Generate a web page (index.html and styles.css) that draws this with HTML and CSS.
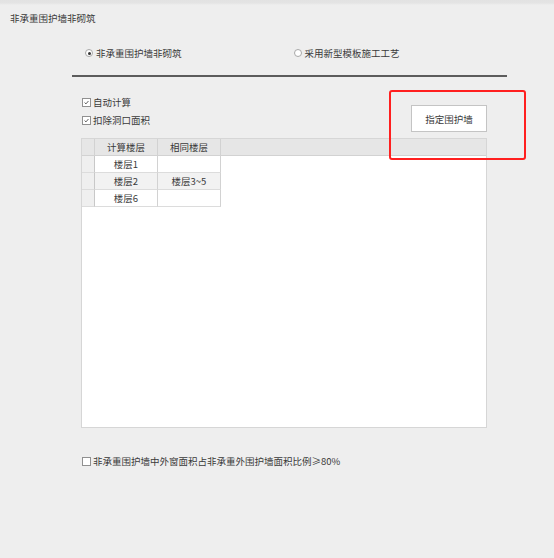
FILE: index.html
```html
<!DOCTYPE html>
<html lang="zh-CN">
<head>
  <meta charset="UTF-8">
  <title>非承重围护墙非砌筑</title>
  <link rel="stylesheet" href="styles.css">
</head>
<body>

<div class="dialog">
  <div class="title">非承重围护墙非砌筑</div>

  <div class="mode-row">
    <label class="radio radio-first"><span class="dot checked"></span>非承重围护墙非砌筑</label>
    <label class="radio radio-second"><span class="dot"></span>采用新型模板施工工艺</label>
  </div>

  <div class="divider"></div>

  <div class="main">
    <div class="options-row">
      <div class="checks">
        <label class="check"><span class="box on"><svg viewBox="0 0 9 9"><path d="M2 4.5 L3.8 6.3 L7 2.6" /></svg></span>自动计算</label>
        <label class="check"><span class="box on"><svg viewBox="0 0 9 9"><path d="M2 4.5 L3.8 6.3 L7 2.6" /></svg></span>扣除洞口面积</label>
      </div>
      <button class="assign-btn">指定围护墙</button>
      <div class="highlight"></div>
    </div>

    <div class="sheet">
      <div class="sheet-head">
        <div class="cell corner"></div>
        <div class="cell col">计算楼层</div>
        <div class="cell col">相同楼层</div>
      </div>
      <div class="sheet-row">
        <div class="cell corner"></div>
        <div class="cell col">楼层1</div>
        <div class="cell col"></div>
      </div>
      <div class="sheet-row alt">
        <div class="cell corner"></div>
        <div class="cell col">楼层2</div>
        <div class="cell col">楼层3~5</div>
      </div>
      <div class="sheet-row">
        <div class="cell corner"></div>
        <div class="cell col">楼层6</div>
        <div class="cell col"></div>
      </div>
    </div>

    <label class="check bottom-check"><span class="box"></span>非承重围护墙中外窗面积占非承重外围护墙面积比例≥80%</label>
  </div>
</div>

</body>
</html>
```

FILE: styles.css
```css
body {
  margin: 0;
  padding: 0;
  height: 558px;
  overflow: hidden;
  font-family: "Noto Sans CJK SC", "Liberation Sans", sans-serif;
  font-size: 9.5px;
  color: #3a3a3a;
  background: linear-gradient(to bottom, #e2e2e2 0, #e4e4e4 3px, #eeeeee 5px) no-repeat;
  background-color: #eeeeee;
}

.title {
  height: 36px;
  line-height: 36px;
  padding-left: 10px;
}

.mode-row {
  display: flex;
  height: 34px;
  align-items: center;
}

.radio {
  display: flex;
  align-items: center;
  gap: 3px;
}

.radio-first {
  margin-left: 85px;
}

.radio-second {
  margin-left: 112px;
}

.dot {
  width: 6px;
  height: 6px;
  border: 1px solid #a8a8a8;
  border-radius: 50%;
  background-color: #fff;
  display: inline-flex;
  align-items: center;
  justify-content: center;
}

.dot.checked::after {
  content: "";
  width: 3px;
  height: 3px;
  border-radius: 50%;
  background-color: #333;
}

.divider {
  margin: 5px 0 0 72px;
  width: 435px;
  height: 2px;
  background-color: #5c5c5c;
}

.main {
  margin-left: 81px;
  width: 406px;
}

.options-row {
  position: relative;
  display: flex;
  justify-content: space-between;
  align-items: flex-start;
  height: 45px;
  margin-top: 16px;
}

.checks {
  display: flex;
  flex-direction: column;
  padding-left: 1px;
}

.check {
  display: flex;
  align-items: center;
  gap: 2px;
  height: 18px;
}

.box {
  width: 7px;
  height: 7px;
  border: 1px solid #909090;
  background-color: #fff;
  display: inline-flex;
}

.box svg {
  width: 7px;
  height: 7px;
}

.box path {
  fill: none;
  stroke: #444;
  stroke-width: 1.1;
}

.assign-btn {
  margin-top: 12px;
  width: 76px;
  height: 27px;
  background-color: #fff;
  border: 1px solid #c4c4c4;
  font-family: inherit;
  font-size: 9.5px;
  color: #3a3a3a;
  padding: 0;
}

/* red annotation frame */
.highlight {
  position: absolute;
  left: 308px;
  top: -3px;
  width: 133px;
  height: 66px;
  border: 2px solid #ff1f1f;
  border-radius: 3px;
}

.sheet {
  height: 288px;
  background-color: #fff;
  border: 1px solid #d6d6d6;
}

.sheet-head {
  display: flex;
  height: 17px;
  background-color: #e6e6e6;
  border-bottom: 1px solid #d2d2d2;
  box-sizing: border-box;
}

.sheet-row {
  display: flex;
  height: 17px;
}

.cell {
  box-sizing: border-box;
  display: flex;
  align-items: center;
  justify-content: center;
  border-right: 1px solid #d2d2d2;
}

.corner {
  width: 13px;
}

.col {
  width: 63px;
}

.sheet-row .cell {
  border-bottom: 1px solid #dcdcdc;
}

.sheet-row .corner {
  background-color: #efefef;
  border-right-color: #c8c8c8;
}

.sheet-row.alt .col {
  background-color: #f2f2f2;
}

.bottom-check {
  margin-top: 24px;
  padding-left: 1px;
}
```
